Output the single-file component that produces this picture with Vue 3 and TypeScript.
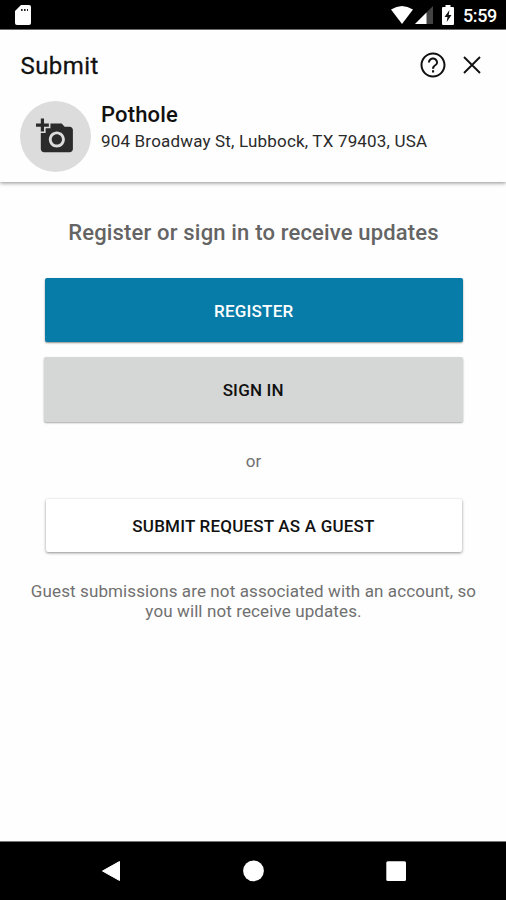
<script setup lang="ts">
interface Report {
  category: string
  address: string
}

const report: Report = {
  category: 'Pothole',
  address: '904 Broadway St, Lubbock, TX 79403, USA',
}
const time = '5:59'
</script>

<template>
  <div class="screen">
    <div class="status-bar">
      <svg class="sd-card" viewBox="0 0 16 20">
        <path d="M6 0h8q2 0 2 2v16q0 2-2 2H2q-2 0-2-2V6z" fill="#fff" />
        <path d="M6 5h1.6M9 5h1.6M12 5h1" stroke="#222" stroke-width="2" />
      </svg>
      <div class="status-right">
        <svg class="wifi" viewBox="0 0 22 18">
          <path d="M0 3.6Q11-3.6 22 3.6L11 18z" fill="#fff" />
        </svg>
        <svg class="signal" viewBox="0 0 18 18">
          <path d="M0 18L18 0v18z" fill="#444" />
          <path d="M0 18L11.5 6.5V18z" fill="#fff" />
        </svg>
        <svg class="battery" viewBox="0 0 12 20">
          <path d="M3.5 0h5v2H11q1 0 1 1v16q0 1-1 1H1q-1 0-1-1V3q0-1 1-1h2.500z" fill="#fff" />
          <path d="M7.500 5L2.500 12H5.500L4.700 17L9.500 10H6.700z" fill="#111" />
        </svg>
        <span class="time">{{ time }}</span>
      </div>
    </div>

    <header class="header">
      <div class="title-row">
        <h1 class="title">Submit</h1>
        <button class="icon-button help" aria-label="Help">
          <svg viewBox="0 0 24 24">
            <path
              d="M11.200 18h1.700v-1.800h-1.700v1.800zm.8-16C6.480 2 2 6.480 2 12s4.480 10 10 10 10-4.480 10-10S17.520 2 12 2zm0 18.400c-4.640 0-8.400-3.760-8.400-8.400s3.760-8.400 8.400-8.400 8.400 3.760 8.400 8.400-3.760 8.400-8.400 8.400zm0-14.400c-2.210 0-4 1.790-4 4h1.500c0-1.380 1.120-2.500 2.500-2.500s2.500 1.120 2.500 2.500c0 2-3.300 1.750-3.300 5h1.700c0-2.250 3.100-2.500 3.100-5 0-2.210-1.790-4-4-4z"
              fill="#111"
            />
          </svg>
        </button>
        <button class="icon-button close" aria-label="Close">
          <svg viewBox="0 0 18 18">
            <path d="M1 1L17 17M17 1L1 17" stroke="#111" stroke-width="1.900" />
          </svg>
        </button>
      </div>
      <div class="report">
        <div class="photo">
          <svg viewBox="0 0 24 24">
            <path
              d="M3 4V1h2v3h3v2H5v3H3V6H0V4zm3 6V7h3V4h7l1.830 2H21c1.100 0 2 .9 2 2v12c0 1.100-.9 2-2 2H5c-1.100 0-2-.9-2-2V10zm7 9c2.760 0 5-2.240 5-5s-2.240-5-5-5-5 2.240-5 5 2.240 5 5 5zm-3.200-5c0 1.770 1.430 3.200 3.200 3.200s3.200-1.430 3.200-3.200-1.430-3.200-3.200-3.200-3.200 1.430-3.200 3.200z"
              fill="#2b2b2b"
            />
          </svg>
        </div>
        <div class="details">
          <div class="category">{{ report.category }}</div>
          <div class="address">{{ report.address }}</div>
        </div>
      </div>
    </header>

    <main class="content">
      <h2 class="prompt">Register or sign in to receive updates</h2>
      <button class="button register">REGISTER</button>
      <button class="button sign-in">SIGN IN</button>
      <div class="or">or</div>
      <button class="button guest">SUBMIT REQUEST AS A GUEST</button>
      <p class="note">
        Guest submissions are not associated with an account, so<br />
        you will not receive updates.
      </p>
    </main>

    <nav class="nav-bar">
      <svg class="nav-icon" viewBox="0 0 22 22"><path d="M2.500 11L19.500 1.500V20.500z" fill="#fff" stroke="#fff" stroke-linejoin="round" /></svg>
      <svg class="nav-icon" viewBox="0 0 22 22"><circle cx="10.500" cy="10.800" r="10.400" fill="#fff" /></svg>
      <svg class="nav-icon" viewBox="0 0 22 22"><rect x="1.300" y="1.300" width="19.700" height="19.700" rx="1.500" fill="#fff" /></svg>
    </nav>
  </div>
</template>

<style>
body {
  margin: 0;
  background: #fefefe;
}
</style>

<style scoped>
.screen {
  display: flex;
  flex-direction: column;
  width: 506px;
  height: 900px;
  background: #fefefe;
  font-family: Roboto, "Liberation Sans", sans-serif;
  color: #111;
  overflow: hidden;
}
svg {
  display: block;
}
button {
  padding: 0;
  border: 0;
  font-family: inherit;
}
.status-bar {
  display: flex;
  flex: none;
  justify-content: space-between;
  box-sizing: border-box;
  height: 30px;
  padding: 5px 9px 0 15px;
  background: #000;
  border-bottom: 1px solid #777;
}
.sd-card {
  width: 16px;
  height: 20px;
}
.status-right {
  display: flex;
}
.wifi {
  width: 22px;
  height: 18px;
  margin-top: 1px;
}
.signal {
  width: 18px;
  height: 18px;
  margin: 1px 0 0 2px;
}
.battery {
  width: 12px;
  height: 20px;
  margin-left: 9px;
}
.time {
  width: 34px;
  margin-left: 9px;
  color: #fff;
  font-size: 18px;
  font-weight: 500;
  letter-spacing: -0.4px;
  line-height: 22px;
  white-space: nowrap;
}
.header {
  flex: none;
  box-sizing: border-box;
  height: 152px;
  padding: 16px 25px 0 20px;
  box-shadow: 0 1px 4px rgba(0, 0, 0, 0.45);
}
.title-row {
  display: flex;
  align-items: center;
  height: 38px;
}
.title {
  flex: 1;
  margin: 0;
  padding: 2px 0 0 0.6px;
  font-size: 24px;
  font-weight: 400;
  letter-spacing: 0.4px;
  -webkit-text-stroke: 0.3px #111;
}
.icon-button {
  background: none;
}
.help svg {
  width: 30px;
  height: 30px;
}
.close {
  margin-left: 15px;
}
.close svg {
  width: 18px;
  height: 18px;
}
.report {
  display: flex;
  gap: 10px;
  padding-top: 17px;
}
.photo {
  box-sizing: border-box;
  width: 71px;
  height: 71px;
  padding: 16px 0 0 16px;
  border-radius: 50%;
  background: #dcdcdc;
}
.photo svg {
  width: 38.500px;
  height: 38.500px;
}
.category {
  font-size: 22px;
  font-weight: 500;
  letter-spacing: 0.15px;
  line-height: 28px;
}
.address {
  font-size: 17px;
  letter-spacing: 0.18px;
  line-height: 24px;
  color: #2a2a2a;
}
.content {
  display: flex;
  flex: 1;
  flex-direction: column;
  align-items: stretch;
  padding: 0 43px 0 44px;
}
.prompt {
  margin: 36px 0 30px;
  color: #646464;
  font-size: 22px;
  font-weight: 500;
  letter-spacing: 0.17px;
  line-height: 30px;
  text-align: center;
  white-space: nowrap;
}
.button {
  border-radius: 2px;
  color: #111;
  font-size: 17px;
  font-weight: 500;
  letter-spacing: 0.2px;
  text-align: center;
  white-space: nowrap;
}
.register {
  height: 64px;
  margin: 0 0.5px 15px 1px;
  padding-top: 1px;
  background: #087ca8;
  color: #fff;
  box-shadow: 0 1px 2px rgba(0, 0, 0, 0.45);
}
.sign-in {
  height: 65px;
  margin-right: 0.5px;
  background: #d5d7d6;
  box-shadow: 0 1px 2px rgba(0, 0, 0, 0.35);
}
.or {
  margin-top: 27px;
  color: #707070;
  font-size: 17px;
  line-height: 24px;
  text-align: center;
}
.guest {
  height: 53px;
  margin: 26px 1.5px 0 1.5px;
  background: #fff;
  box-shadow: 0 1px 3px rgba(0, 0, 0, 0.45);
}
.note {
  margin: 29px -20px 0;
  color: #707070;
  font-size: 17px;
  letter-spacing: 0.11px;
  line-height: 20px;
  text-align: center;
  white-space: nowrap;
}
.nav-bar {
  display: flex;
  flex: none;
  align-items: center;
  justify-content: space-between;
  box-sizing: border-box;
  height: 59px;
  padding: 0 99px 0 100px;
  border-top: 1px solid #777;
  background: #000;
}
.nav-icon {
  width: 22px;
  height: 22px;
}
</style>
